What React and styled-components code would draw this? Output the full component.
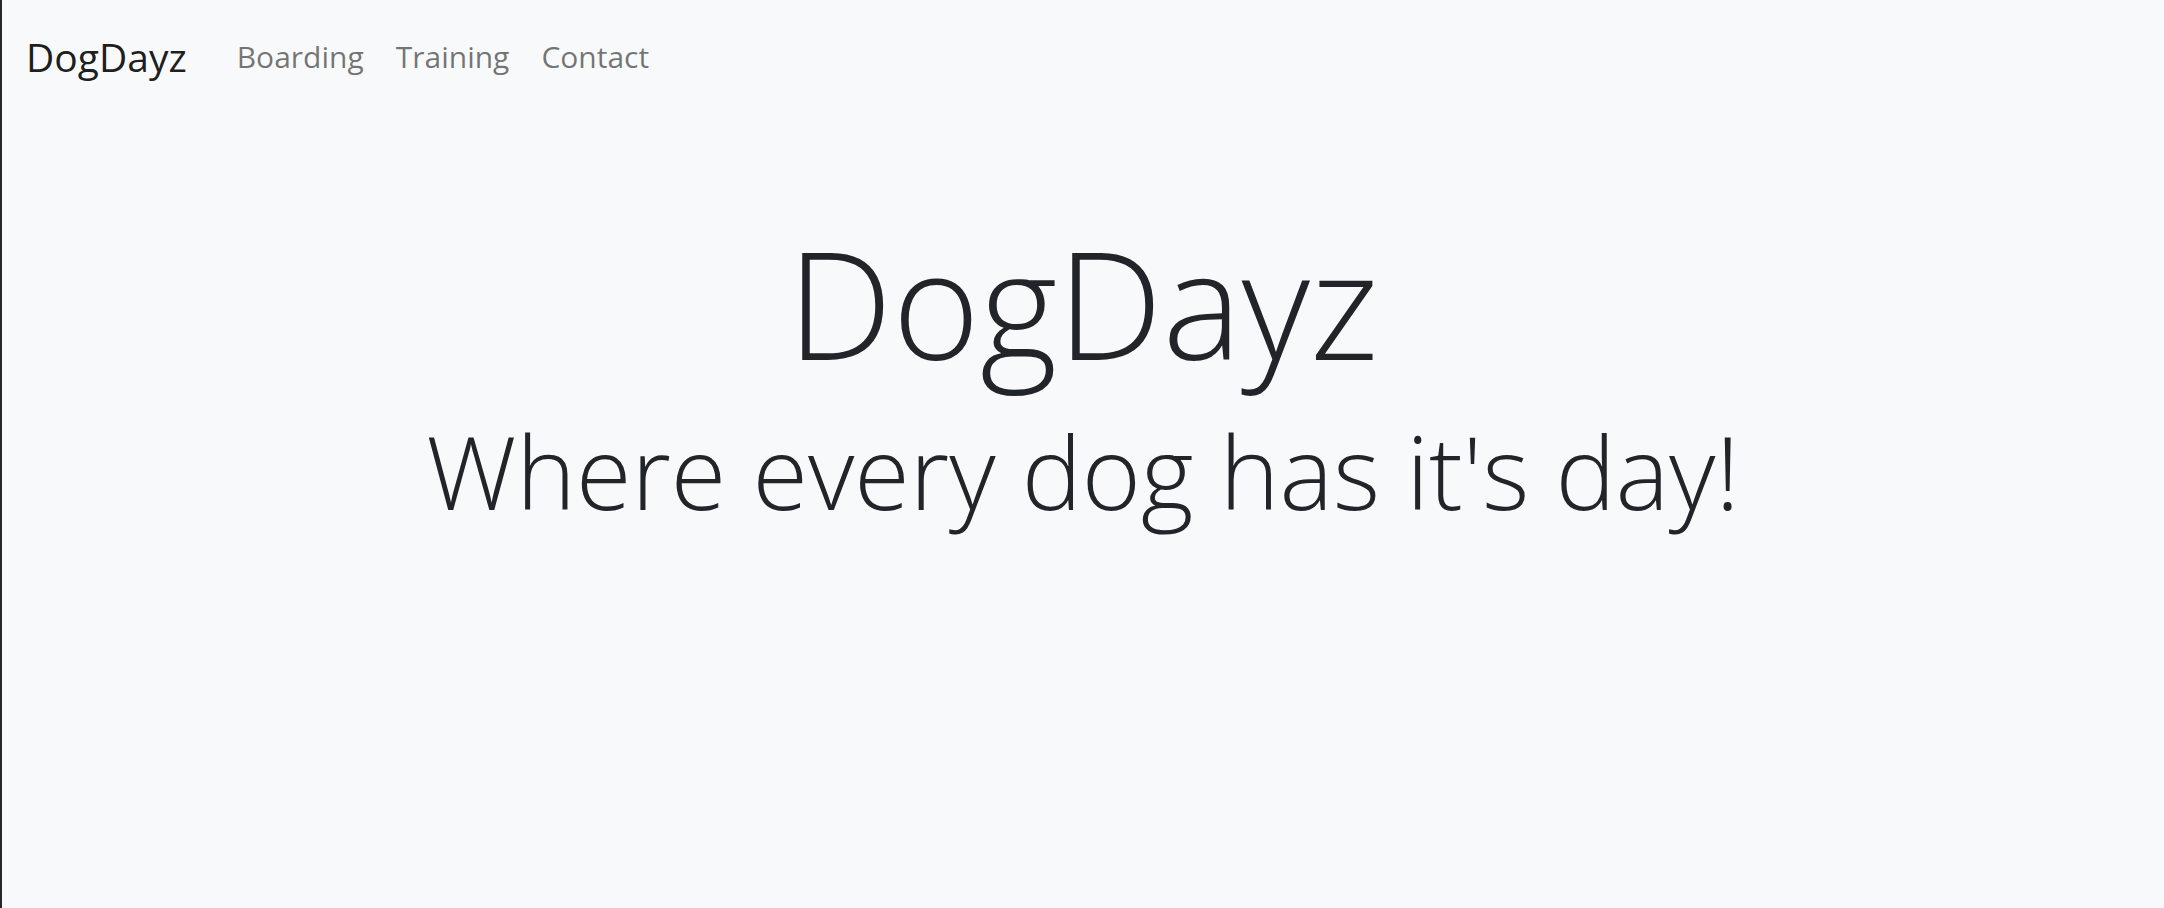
import styled, { createGlobalStyle } from "styled-components";

const GlobalStyle = createGlobalStyle`
  html, body {
    margin: 0;
    padding: 0;
    background-color: #f8f9fa;
  }

  body {
    font-family: "Open Sans", "Noto Sans", "Liberation Sans", sans-serif;
    color: #212529;
  }
`;

const Page = styled.div`
  min-height: 908px;
  background-color: #f8f9fa;
  border-left: 2px solid #272727;
  box-sizing: border-box;
`;

const Navbar = styled.nav`
  display: flex;
  align-items: center;
  height: 112px;
  padding: 0 24px;
`;

const Brand = styled.a`
  font-size: 39px;
  color: rgba(0, 0, 0, 0.9);
  text-decoration: none;
  margin-right: 34px;
`;

const NavList = styled.div`
  display: flex;
  align-items: center;
`;

const NavLink = styled.a`
  font-size: 30px;
  padding: 0 16px;
  color: rgba(0, 0, 0, 0.55);
  text-decoration: none;
`;

const Hero = styled.header`
  display: flex;
  flex-direction: column;
  align-items: center;
  padding-top: 109px;
`;

const Title = styled.h1`
  margin: 0;
  font-size: 149px;
  font-weight: 300;
  line-height: 1.1;
`;

const Tagline = styled.p`
  margin: 26px 0 0;
  font-size: 101px;
  font-weight: 300;
  line-height: 1.2;
`;

export default function App() {
  return (
    <Page>
      <GlobalStyle />
      <Navbar>
        <Brand href="#">DogDayz</Brand>
        <NavList>
          <NavLink href="#">Boarding</NavLink>
          <NavLink href="#">Training</NavLink>
          <NavLink href="#">Contact</NavLink>
        </NavList>
      </Navbar>
      <Hero>
        <Title>DogDayz</Title>
        <Tagline>Where every dog has it's day!</Tagline>
      </Hero>
    </Page>
  );
}
